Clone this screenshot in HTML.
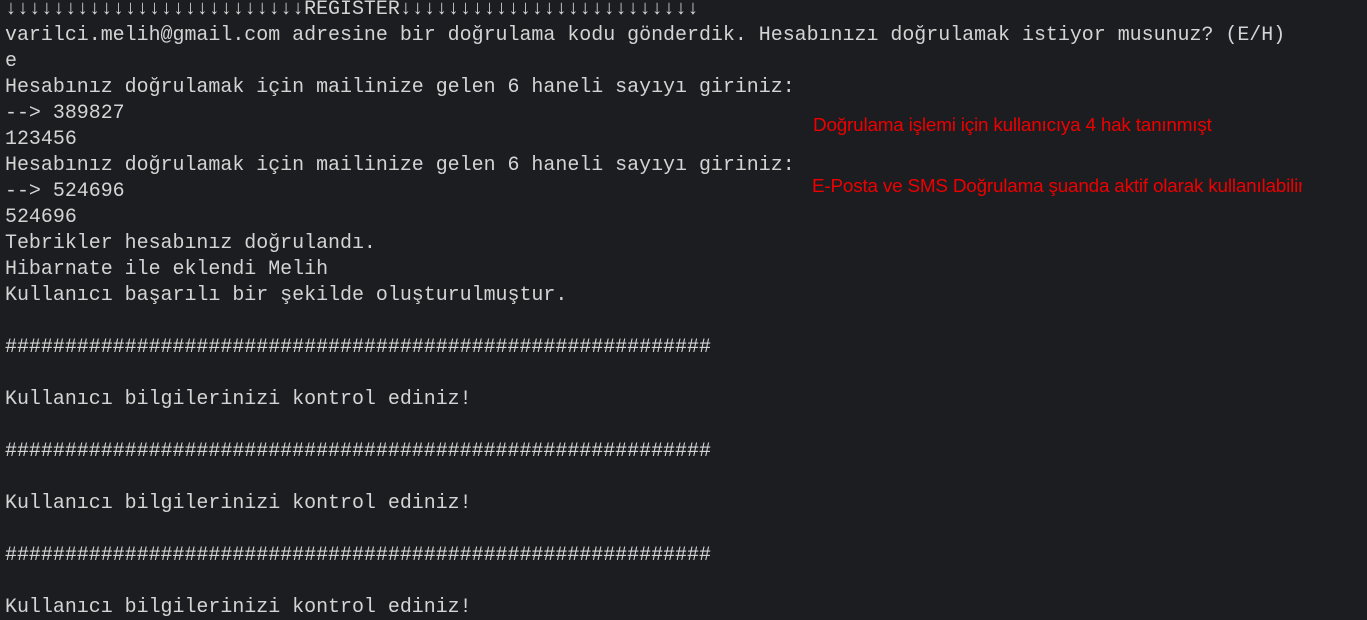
<!DOCTYPE html>
<html><head><meta charset="utf-8"><style>
html,body{margin:0;padding:0;width:1367px;height:620px;overflow:hidden;background:#1b1d20;}
pre{position:absolute;left:5px;top:-4px;margin:0;font-family:"Liberation Mono",monospace;font-size:19.95px;line-height:26px;color:#d4d4d4;}
.r{position:absolute;font-family:"Liberation Sans",sans-serif;font-size:18.9px;color:#ee0000;white-space:nowrap;overflow:hidden;letter-spacing:-0.2px;}
</style></head><body>
<pre>↓↓↓↓↓↓↓↓↓↓↓↓↓↓↓↓↓↓↓↓↓↓↓↓↓REGİSTER↓↓↓↓↓↓↓↓↓↓↓↓↓↓↓↓↓↓↓↓↓↓↓↓↓
varilci.melih@gmail.com adresine bir doğrulama kodu gönderdik. Hesabınızı doğrulamak istiyor musunuz? (E/H)
e
Hesabınız doğrulamak için mailinize gelen 6 haneli sayıyı giriniz:
--> 389827
123456
Hesabınız doğrulamak için mailinize gelen 6 haneli sayıyı giriniz:
--> 524696
524696
Tebrikler hesabınız doğrulandı.
Hibarnate ile eklendi Melih
Kullanıcı başarılı bir şekilde oluşturulmuştur.

###########################################################

Kullanıcı bilgilerinizi kontrol ediniz!

###########################################################

Kullanıcı bilgilerinizi kontrol ediniz!

###########################################################

Kullanıcı bilgilerinizi kontrol ediniz!</pre>
<div class="r" style="left:813px;top:115px;width:408px;">Doğrulama işlemi için kullanıcıya 4 hak tanınmışt</div>
<div class="r" style="left:812px;top:176px;width:490px;">E-Posta ve SMS Doğrulama şuanda aktif olarak kullanılabilir</div>
</body></html>
